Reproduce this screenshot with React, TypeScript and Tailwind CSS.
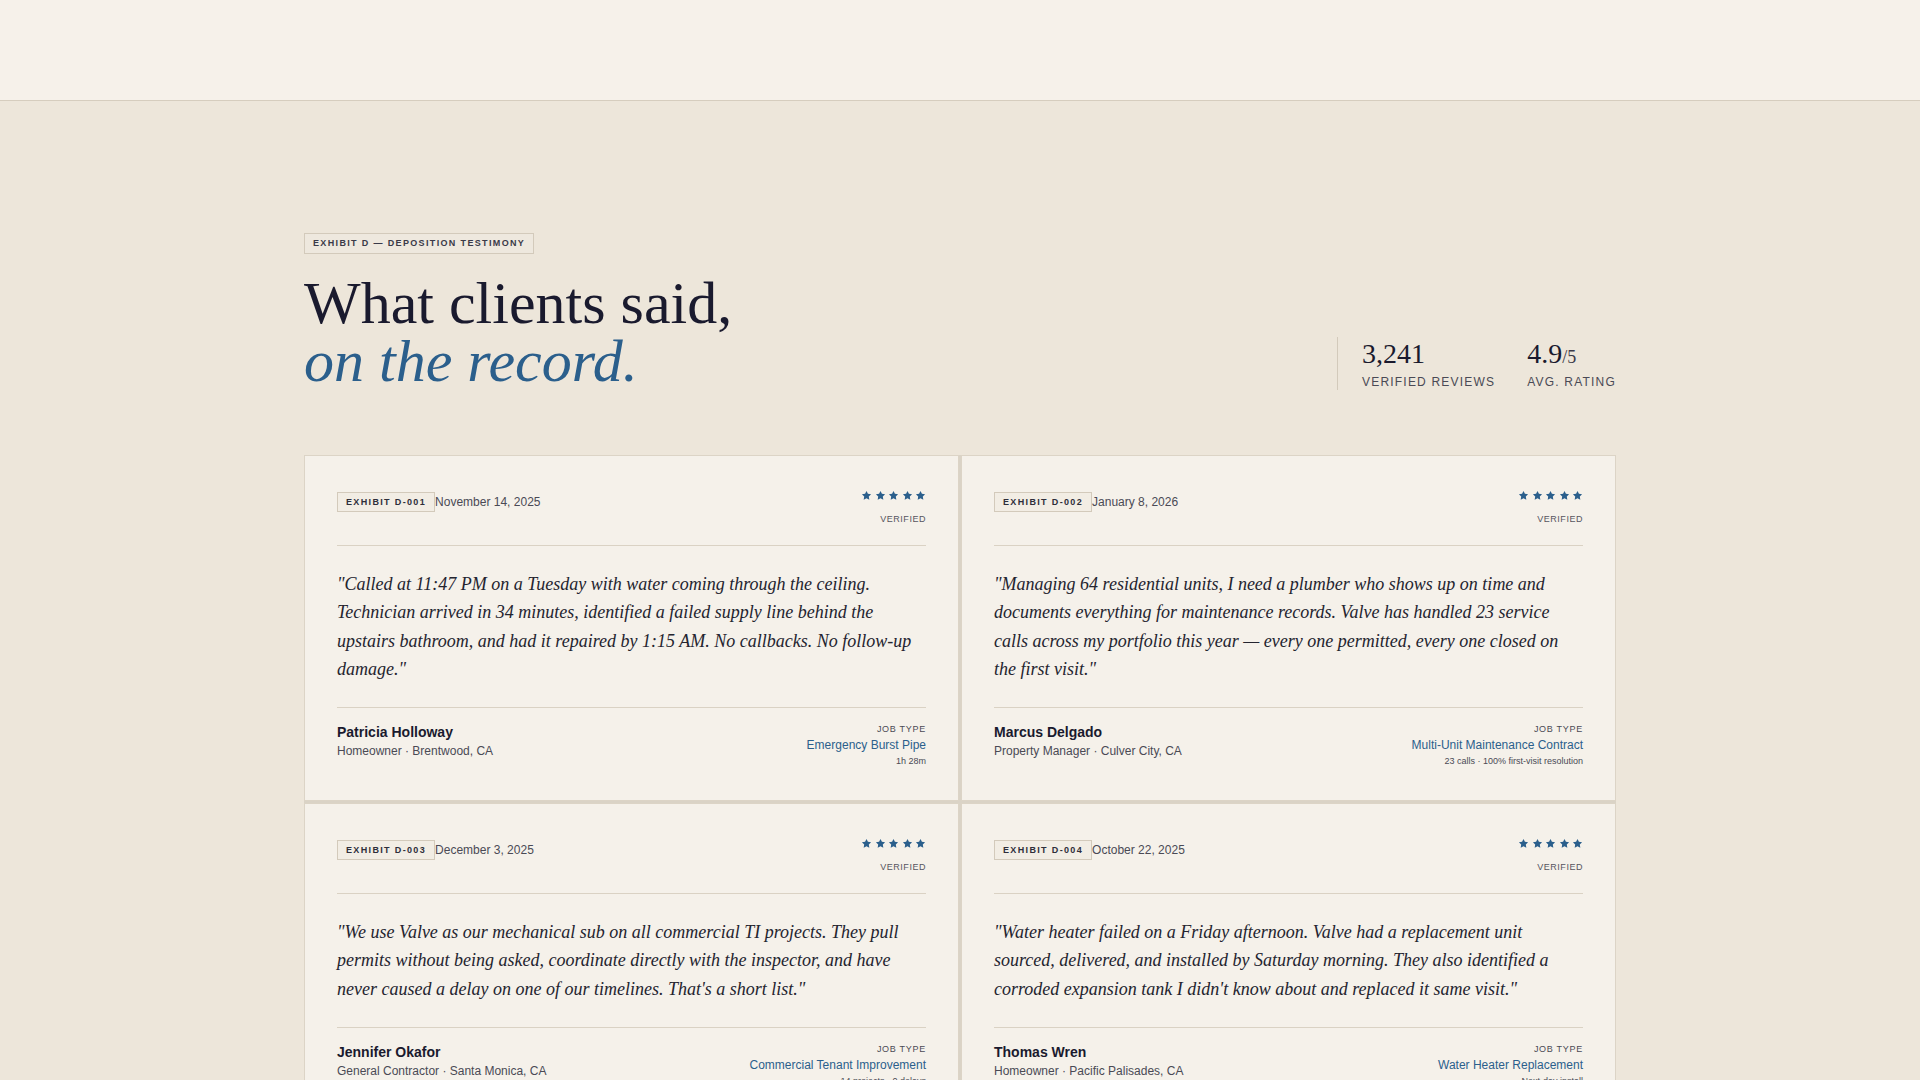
import React from "react";

const serif = { fontFamily: '"Liberation Serif", "Times New Roman", serif' };

type Review = {
  id: string;
  date: string;
  quote: string;
  name: string;
  role: string;
  job: string;
  detail: string;
};

const reviews: Review[] = [
  {
    id: "EXHIBIT D-001",
    date: "November 14, 2025",
    quote:
      '"Called at 11:47 PM on a Tuesday with water coming through the ceiling. Technician arrived in 34 minutes, identified a failed supply line behind the upstairs bathroom, and had it repaired by 1:15 AM. No callbacks. No follow-up damage."',
    name: "Patricia Holloway",
    role: "Homeowner · Brentwood, CA",
    job: "Emergency Burst Pipe",
    detail: "1h 28m",
  },
  {
    id: "EXHIBIT D-002",
    date: "January 8, 2026",
    quote:
      '"Managing 64 residential units, I need a plumber who shows up on time and documents everything for maintenance records. Valve has handled 23 service calls across my portfolio this year — every one permitted, every one closed on the first visit."',
    name: "Marcus Delgado",
    role: "Property Manager · Culver City, CA",
    job: "Multi-Unit Maintenance Contract",
    detail: "23 calls · 100% first-visit resolution",
  },
  {
    id: "EXHIBIT D-003",
    date: "December 3, 2025",
    quote:
      '"We use Valve as our mechanical sub on all commercial TI projects. They pull permits without being asked, coordinate directly with the inspector, and have never caused a delay on one of our timelines. That\'s a short list."',
    name: "Jennifer Okafor",
    role: "General Contractor · Santa Monica, CA",
    job: "Commercial Tenant Improvement",
    detail: "14 projects · 0 delays",
  },
  {
    id: "EXHIBIT D-004",
    date: "October 22, 2025",
    quote:
      '"Water heater failed on a Friday afternoon. Valve had a replacement unit sourced, delivered, and installed by Saturday morning. They also identified a corroded expansion tank I didn\'t know about and replaced it same visit."',
    name: "Thomas Wren",
    role: "Homeowner · Pacific Palisades, CA",
    job: "Water Heater Replacement",
    detail: "Next-day install",
  },
];

function Star() {
  return (
    <svg viewBox="0 0 24 24" className="w-[11px] h-[11px]" fill="#2b5f8c">
      <path d="M12 2l3.09 6.26L22 9.27l-5 4.87 1.18 6.88L12 17.77l-6.18 3.25L7 14.14 2 9.27l6.91-1.01L12 2z" />
    </svg>
  );
}

function Card({ r }: { r: Review }) {
  return (
    <div className="bg-[#f5f1ea] border border-[#dcd4c6] p-8">
      <div className="flex justify-between items-start pb-5 border-b border-[#dad2c4]">
        <div className="flex items-center mt-1">
          <span className="border border-[#d3cabb] bg-[#f2ede4] px-2 py-[3px] text-[9px] leading-[12px] font-bold tracking-[0.15em] text-[#2e2e3a]">
            {r.id}
          </span>
          <span className="text-[12px] leading-4 text-[#4a4a55]">{r.date}</span>
        </div>
        <div className="flex flex-col items-end">
          <div className="flex gap-[2.5px] mt-[2px]">
            <Star />
            <Star />
            <Star />
            <Star />
            <Star />
          </div>
          <div className="mt-3 text-[9px] leading-[12px] tracking-[0.06em] text-[#55555f]">VERIFIED</div>
        </div>
      </div>
      <p style={serif} className="italic text-[18px] leading-[28.3px] text-[#24242f] pt-6 pb-6 border-b border-[#dad2c4]">
        {r.quote}
      </p>
      <div className="flex justify-between items-start pt-[14px]">
        <div>
          <div className="text-[14px] leading-5 font-bold text-[#1a1a2e]">{r.name}</div>
          <div className="mt-px text-[12px] leading-4 text-[#4a4a55]">{r.role}</div>
        </div>
        <div className="flex flex-col items-end text-right">
          <div className="text-[9px] leading-[14px] tracking-[0.08em] text-[#4a4a55]">JOB TYPE</div>
          <div className="text-[12px] leading-[18px] text-[#2b5f8c]">{r.job}</div>
          <div className="text-[9px] leading-[14px] text-[#4a4a55]">{r.detail}</div>
        </div>
      </div>
    </div>
  );
}

export default function App() {
  return (
    <div
      className="min-h-screen bg-[#ede6da]"
      style={{ fontFamily: '"Liberation Sans", Arial, sans-serif' }}
    >
      <header className="h-[101px] bg-[#f6f1ea] border-b border-[#d6cdbe]" />
      <section className="max-w-[1312px] mx-auto pt-[132px] pb-24">
        <div className="flex justify-between items-end mb-[65px]">
          <div>
            <div className="flex">
              <span className="border border-[#d3cabb] bg-[#eee8de] px-2 py-1 text-[9px] leading-[11px] font-bold tracking-[0.15em] text-[#3a3a48]">
                EXHIBIT D — DEPOSITION TESTIMONY
              </span>
            </div>
            <h1 style={serif} className="mt-5 text-[60px] leading-[58px] font-normal text-[#1a1a2e]">
              <span className="block">What clients said,</span>
              <em className="block italic text-[#2b5f8c]">on the record.</em>
            </h1>
          </div>
          <div className="flex gap-8 border-l border-[#d3cabb] pl-6">
            <div>
              <div style={serif} className="text-[28px] leading-[1.2] text-[#1a1a2e]">3,241</div>
              <div className="mt-[3px] text-[12px] leading-4 tracking-[0.1em] text-[#4a4a55]">VERIFIED REVIEWS</div>
            </div>
            <div>
              <div style={serif} className="text-[28px] leading-[1.2] text-[#1a1a2e]">
                4.9<span className="text-[18px] text-[#3a3a48]">/5</span>
              </div>
              <div className="mt-[3px] text-[12px] leading-4 tracking-[0.1em] text-[#4a4a55]">AVG. RATING</div>
            </div>
          </div>
        </div>
        <div className="grid grid-cols-2 gap-[2px] bg-[#dad3c6]">
          {reviews.map((r) => (
            <Card key={r.id} r={r} />
          ))}
        </div>
      </section>
    </div>
  );
}
